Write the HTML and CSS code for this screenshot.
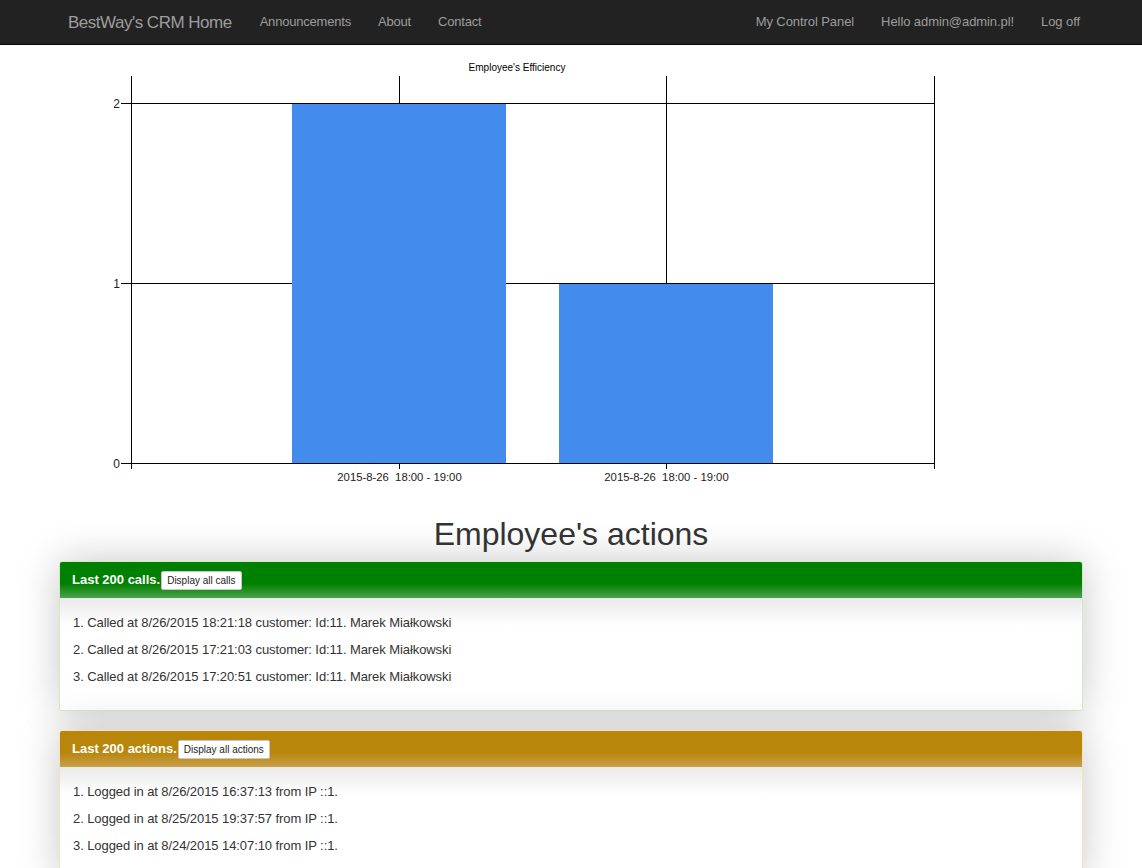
FILE: index.html
```html
<!DOCTYPE html>
<html>
<head>
<meta charset="utf-8">
<title>BestWay's CRM Home</title>
<link rel="stylesheet" href="styles.css">
</head>
<body>
<nav class="navbar">
  <div class="nav-inner">
    <div class="nav-left">
      <a class="brand" href="#">BestWay's CRM Home</a>
      <a class="nav-link" href="#">Announcements</a>
      <a class="nav-link" href="#">About</a>
      <a class="nav-link" href="#">Contact</a>
    </div>
    <div class="nav-right">
      <a class="nav-link" href="#">My Control Panel</a>
      <a class="nav-link" href="#">Hello admin@admin.pl!</a>
      <a class="nav-link" href="#">Log off</a>
    </div>
  </div>
</nav>
<main class="container">
  <svg class="chart" width="1024" height="445" viewBox="1 0 1024 445">
    <text class="chart-title" x="459" y="26" text-anchor="middle">Employee's Efficiency</text>
    <g stroke="#000" stroke-width="1" shape-rendering="crispEdges">
      <line x1="63" y1="58.5" x2="877" y2="58.5"/>
      <line x1="63" y1="238.5" x2="877" y2="238.5"/>
      <line x1="63" y1="418.5" x2="877" y2="418.5"/>
      <line x1="73.5" y1="31" x2="73.5" y2="424"/>
      <line x1="341.5" y1="31" x2="341.5" y2="424"/>
      <line x1="608.5" y1="31" x2="608.5" y2="424"/>
      <line x1="876.5" y1="31" x2="876.5" y2="424"/>
    </g>
    <rect x="234" y="59" width="214" height="359" fill="#438bec"/>
    <rect x="501" y="239" width="214" height="179" fill="#438bec"/>
    <g class="axis-label">
      <text class="yl" x="62" y="62.5" text-anchor="end">2</text>
      <text class="yl" x="62" y="242.5" text-anchor="end">1</text>
      <text class="yl" x="62" y="422.5" text-anchor="end">0</text>
      <text class="xl" x="341.5" y="436" text-anchor="middle">2015-8-26  18:00 - 19:00</text>
      <text class="xl" x="608.5" y="436" text-anchor="middle">2015-8-26  18:00 - 19:00</text>
    </g>
  </svg>

  <h2 class="section-title">Employee's actions</h2>

  <section class="panel panel-green">
    <div class="panel-heading">Last 200 calls.<button class="small-btn">Display all calls</button></div>
    <div class="panel-body">
      <p>1. Called at 8/26/2015 18:21:18 customer: Id:11. Marek Miałkowski</p>
      <p>2. Called at 8/26/2015 17:21:03 customer: Id:11. Marek Miałkowski</p>
      <p>3. Called at 8/26/2015 17:20:51 customer: Id:11. Marek Miałkowski</p>
    </div>
  </section>

  <section class="panel panel-gold">
    <div class="panel-heading">Last 200 actions.<button class="small-btn">Display all actions</button></div>
    <div class="panel-body">
      <p>1. Logged in at 8/26/2015 16:37:13 from IP ::1.</p>
      <p>2. Logged in at 8/25/2015 19:37:57 from IP ::1.</p>
      <p>3. Logged in at 8/24/2015 14:07:10 from IP ::1.</p>
    </div>
  </section>
</main>
</body>
</html>
```

FILE: styles.css
```css
* { box-sizing: border-box; }
html, body { margin: 0; padding: 0; }
body {
  font-family: "Liberation Sans", Arial, Helvetica, sans-serif;
  font-size: 14px;
  line-height: 20px;
  color: #333;
  background: #fff;
}
a { text-decoration: none; }

.navbar {
  background: #222;
  border-bottom: 1px solid #080808;
  height: 45px;
}
.nav-inner {
  width: 1024px;
  margin: 0 auto;
  height: 43px;
  display: flex;
  justify-content: space-between;
  align-items: center;
}
.nav-left, .nav-right {
  display: flex;
  align-items: center;
}
.brand {
  color: #9d9d9d;
  font-size: 17px;
  letter-spacing: -0.5px;
  line-height: 20px;
  padding-left: 9px;
  margin-right: 28px;
  position: relative;
  top: 1px;
}
.nav-link {
  color: #9d9d9d;
  font-size: 13px;
  letter-spacing: -0.2px;
  line-height: 20px;
}
.nav-left .nav-link { margin-right: 27px; }
.nav-right .nav-link {
  margin-left: 27px;
  letter-spacing: -0.08px;
}
.nav-right .nav-link:last-child { margin-right: 3px; }

.container {
  width: 1024px;
  margin: 0 auto;
}
.chart { display: block; }
.chart-title {
  font-family: "Liberation Sans", Arial, sans-serif;
  font-size: 10px;
  fill: #000;
}
.axis-label text {
  font-family: "Liberation Sans", Arial, sans-serif;
  font-size: 11.3px;
  fill: #222;
  white-space: pre;
}
.axis-label .yl { font-size: 12px; }

.section-title {
  text-align: center;
  font-size: 32px;
  font-weight: normal;
  line-height: 36px;
  margin: 26px 0 9px;
  color: #333;
}

.panel {
  border-radius: 3px;
  background: #fff;
  box-shadow: 0 0 40px rgba(0, 0, 0, 0.22);
  margin-bottom: 19px;
  overflow: hidden;
}
.panel-green { border: 1px solid #d6e9c6; }
.panel-gold { border: 1px solid #f3e3c0; }
.panel-heading {
  height: 36px;
  display: flex;
  align-items: center;
  padding: 0 12px;
  color: #fff;
  font-weight: bold;
  font-size: 13px;
}
.panel-green .panel-heading {
  background: linear-gradient(to bottom, #008000 0%, #008000 60%, #4aa34a 100%);
}
.panel-gold .panel-heading {
  background: linear-gradient(to bottom, #b8860b 0%, #b8860b 60%, #c9a04a 100%);
}
.small-btn {
  font-family: "Liberation Sans", Arial, sans-serif;
  font-size: 10px;
  line-height: 13px;
  font-weight: normal;
  color: #222;
  background: #fff;
  border: 1px solid #c8c8c8;
  border-radius: 2px;
  padding: 2px 5px;
  margin-left: 1px;
  margin-top: 1px;
}
.panel-body {
  padding: 15px 13px 16px;
  background: linear-gradient(to bottom, #eaeaea 0px, #fff 28px);
}
.panel-body p {
  margin: 0 0 7px;
  font-size: 13px;
  letter-spacing: -0.08px;
  line-height: 20px;
}
```
